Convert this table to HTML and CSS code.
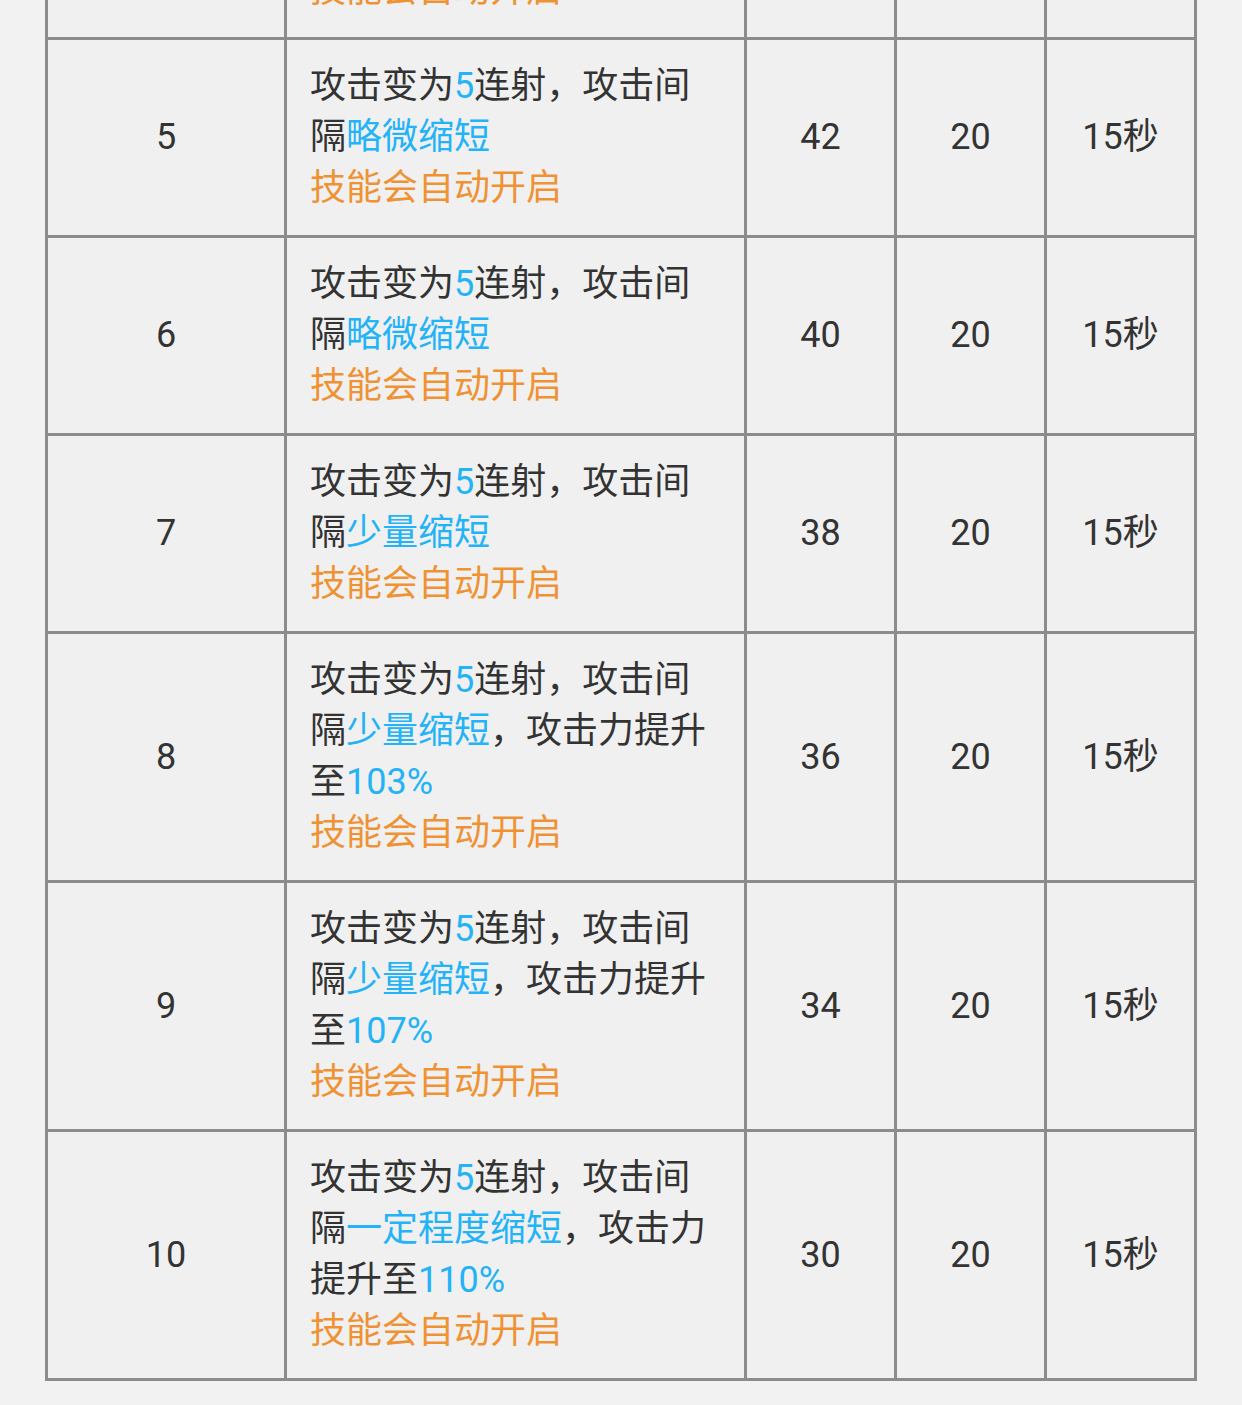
FILE: index.html
```html
<!DOCTYPE html>
<html lang="zh-CN">
<head>
<meta charset="utf-8">
<title>技能等级表</title>
<link rel="stylesheet" href="styles.css">
</head>
<body>
<div class="page">
  <table class="skill-table">
    <colgroup>
      <col class="c-level">
      <col class="c-desc">
      <col class="c-num">
      <col class="c-num">
      <col class="c-num">
    </colgroup>
    <tbody>
      <tr>
        <td class="num">4</td>
        <td class="desc">
          <div class="line">攻击变为<span class="hl">5</span>连射，攻击间</div>
          <div class="line">隔<span class="hl">略微缩短</span></div>
          <div class="line auto">技能会自动开启</div>
        </td>
        <td class="num">44</td>
        <td class="num">20</td>
        <td class="num">15秒</td>
      </tr>
      <tr>
        <td class="num">5</td>
        <td class="desc">
          <div class="line">攻击变为<span class="hl">5</span>连射，攻击间</div>
          <div class="line">隔<span class="hl">略微缩短</span></div>
          <div class="line auto">技能会自动开启</div>
        </td>
        <td class="num">42</td>
        <td class="num">20</td>
        <td class="num">15秒</td>
      </tr>
      <tr>
        <td class="num">6</td>
        <td class="desc">
          <div class="line">攻击变为<span class="hl">5</span>连射，攻击间</div>
          <div class="line">隔<span class="hl">略微缩短</span></div>
          <div class="line auto">技能会自动开启</div>
        </td>
        <td class="num">40</td>
        <td class="num">20</td>
        <td class="num">15秒</td>
      </tr>
      <tr>
        <td class="num">7</td>
        <td class="desc">
          <div class="line">攻击变为<span class="hl">5</span>连射，攻击间</div>
          <div class="line">隔<span class="hl">少量缩短</span></div>
          <div class="line auto">技能会自动开启</div>
        </td>
        <td class="num">38</td>
        <td class="num">20</td>
        <td class="num">15秒</td>
      </tr>
      <tr>
        <td class="num">8</td>
        <td class="desc">
          <div class="line">攻击变为<span class="hl">5</span>连射，攻击间</div>
          <div class="line">隔<span class="hl">少量缩短</span>，攻击力提升</div>
          <div class="line">至<span class="hl">103%</span></div>
          <div class="line auto">技能会自动开启</div>
        </td>
        <td class="num">36</td>
        <td class="num">20</td>
        <td class="num">15秒</td>
      </tr>
      <tr>
        <td class="num">9</td>
        <td class="desc">
          <div class="line">攻击变为<span class="hl">5</span>连射，攻击间</div>
          <div class="line">隔<span class="hl">少量缩短</span>，攻击力提升</div>
          <div class="line">至<span class="hl">107%</span></div>
          <div class="line auto">技能会自动开启</div>
        </td>
        <td class="num">34</td>
        <td class="num">20</td>
        <td class="num">15秒</td>
      </tr>
      <tr>
        <td class="num">10</td>
        <td class="desc">
          <div class="line">攻击变为<span class="hl">5</span>连射，攻击间</div>
          <div class="line">隔<span class="hl">一定程度缩短</span>，攻击力</div>
          <div class="line">提升至<span class="hl">110%</span></div>
          <div class="line auto">技能会自动开启</div>
        </td>
        <td class="num">30</td>
        <td class="num">20</td>
        <td class="num">15秒</td>
      </tr>
    </tbody>
  </table>
</div>
</body>
</html>
```
FILE: styles.css
```css
html, body {
  margin: 0;
  padding: 0;
  background: #f2f2f2;
}

.page {
  overflow: hidden;
  height: 1405px;
}

.skill-table {
  border-collapse: collapse;
  table-layout: fixed;
  width: 1152px;
  margin: -161px 45px 0;
  background: #f0f0f0;
  font-family: Roboto, "Noto Sans CJK SC", sans-serif;
  font-size: 36px;
  color: #333333;
}

.c-level { width: 239px; }
.c-desc { width: 460px; }
.c-num { width: 150px; }

.skill-table td {
  border: 3px solid #8c8c8c;
  line-height: 51px;
}

.num {
  text-align: center;
  vertical-align: middle;
  padding: 0;
}

.desc {
  text-align: left;
  vertical-align: top;
  padding: 21px 23px;
}

.line {
  height: 51px;
  white-space: nowrap;
}

.hl { color: #23b3f6; }
.auto { color: #ef9234; }
```
